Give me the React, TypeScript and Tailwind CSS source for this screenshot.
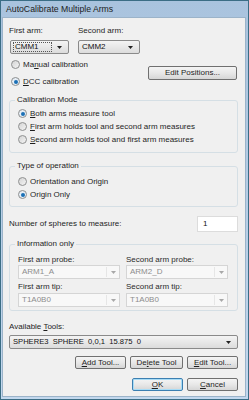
import React from "react";

const font = { fontFamily: '"Liberation Sans", Arial, sans-serif' };

function Radio({ checked, label, u }: { checked?: boolean; label: string; u?: number }) {
  return (
    <div className="flex items-center h-[13px]">
      <span
        className={`w-[9px] h-[9px] rounded-full border border-[#8e8f8f] flex items-center justify-center ${
          checked ? "bg-[#e6eef6]" : "bg-gradient-to-br from-[#d4d4d4] to-[#f4f4f4]"
        }`}
      >
        {checked && <span className="w-[4px] h-[4px] rounded-full bg-[#1b6fb5]" />}
      </span>
      <span className="ml-[3px] text-[#1e1e1e]">
        {u !== undefined ? (
          <>
            {label.slice(0, u)}
            <span className="underline">{label[u]}</span>
            {label.slice(u + 1)}
          </>
        ) : (
          label
        )}
      </span>
    </div>
  );
}

function Arrow({ light }: { light?: boolean }) {
  return (
    <svg width="5" height="3" viewBox="0 0 5 3">
      <path d="M0 0h5L2.5 3z" fill={light ? "#a8a8a8" : "#222"} />
    </svg>
  );
}

function Combo({ value, w, focus }: { value: string; w: string; focus?: boolean }) {
  return (
    <div
      className={`${w} h-[14px] rounded-[2px] border border-[#8a8a8a] bg-gradient-to-b from-[#f4f4f4] to-[#dcdcdc] flex items-center pl-[2px] pr-[6px]`}
    >
      <span
        className={`flex-1 h-[10px] flex items-center pl-[1px] text-[#111] ${
          focus ? "border border-dotted border-[#555] mr-[5px]" : ""
        }`}
      >
        {value}
      </span>
      <Arrow />
    </div>
  );
}

function DisabledCombo({ value }: { value: string }) {
  return (
    <div className="w-[102px] h-[14px] border border-[#d5d5d5] bg-[#f8f8f8] flex items-center pl-[3px]">
      <span className="flex-1 text-[#8d8d8d]">{value}</span>
      <span className="w-px h-[10px] bg-[#e6e6e6]" />
      <span className="w-[12px] flex justify-center">
        <Arrow light />
      </span>
    </div>
  );
}

function Btn({ children, w, h = "h-[13px]", def }: { children: React.ReactNode; w: string; h?: string; def?: boolean }) {
  return (
    <div
      className={`${w} ${h} rounded-[2px] border ${
        def ? "border-[#3c7fb1] shadow-[inset_0_0_0_1px_#a8dcf6]" : "border-[#707070]"
      } bg-gradient-to-b from-[#f4f4f4] via-[#e8e8e8] to-[#d6d6d6] flex items-center justify-center text-[#1e1e1e]`}
    >
      {children}
    </div>
  );
}

function Group({ title, children, cls }: { title: string; children: React.ReactNode; cls: string }) {
  return (
    <div className={`relative border border-[#d5dfe5] rounded-[3px] ${cls}`}>
      <span className="absolute -top-[7px] left-[5px] px-[2px] bg-[#f0f0f0] text-[#1e1e1e] leading-[12px]">
        {title}
      </span>
      {children}
    </div>
  );
}

export default function App() {
  return (
    <div
      style={font}
      className="w-[249px] h-[400px] bg-[#3b6d85] p-px text-[8px] leading-[12px] flex flex-col"
    >
      <div className="flex-1 flex flex-col bg-gradient-to-b from-[#a9c3de] to-[#c3d8ee] pl-[1px] pr-[2px] pb-[2px]">
        {/* Title bar */}
        <div className="h-[16px] flex items-center pl-[4px] text-[8.7px] text-[#1c1c1c]">
          AutoCalibrate Multiple Arms
        </div>

        {/* Body */}
        <div className="flex-1 bg-[#f0f0f0] border border-[#9bb3c9] pl-[6px] pr-[7px] pt-[7px] flex flex-col">
          <div className="flex gap-[9px]">
            <div className="flex flex-col">
              <span className="text-[#1e1e1e] h-[12px]">First arm:</span>
              <div className="mt-[3px] ml-[1px]">
                <Combo value="CMM1" w="w-[59px]" focus />
              </div>
            </div>
            <div className="flex flex-col">
              <span className="text-[#1e1e1e] h-[12px]">Second arm:</span>
              <div className="mt-[3px]">
                <Combo value="CMM2" w="w-[62px]" />
              </div>
            </div>
          </div>

          <div className="flex mt-[4px]">
            <div className="flex flex-col gap-[4px] pl-[2px]">
              <Radio label="Manual calibration" u={2} />
              <Radio label="DCC calibration" checked u={0} />
            </div>
            <div className="ml-auto mt-[8px] mr-[1px]">
              <Btn w="w-[89px]" h="h-[14px]">Edit Positions...</Btn>
            </div>
          </div>

          <Group title="Calibration Mode" cls="mt-[12px] h-[53px] pl-[8px] pt-[6px] flex flex-col">
            <Radio label="Both arms measure tool" checked u={0} />
            <Radio label="First arm holds tool and second arm measures" u={0} />
            <Radio label="Second arm holds tool and first arm measures" u={0} />
          </Group>

          <Group title="Type of operation" cls="mt-[13px] h-[41px] pl-[8px] pt-[8px] flex flex-col">
            <Radio label="Orientation and Origin" />
            <Radio label="Origin Only" checked />
          </Group>

          <div className="flex items-center mt-[9px] h-[16px]">
            <span className="text-[#1e1e1e]">Number of spheres to measure:</span>
            <div className="ml-auto w-[41px] h-[16px] bg-white border border-[#dcdcdc] pl-[5px] flex items-center text-[#111]">
              1
            </div>
          </div>

          <Group title="Information only" cls="mt-[12px] h-[67px] px-[8px] pt-[9px]">
            <div className="flex gap-[6px]">
              <div className="flex flex-col">
                <span className="text-[#2a2a2a] leading-[11px]">First arm probe:</span>
                <DisabledCombo value="ARM1_A" />
                <span className="text-[#2a2a2a] leading-[11px] mt-[2px]">First arm tip:</span>
                <div className="mt-[1px]">
                  <DisabledCombo value="T1A0B0" />
                </div>
              </div>
              <div className="flex flex-col">
                <span className="text-[#2a2a2a] leading-[11px]">Second arm probe:</span>
                <DisabledCombo value="ARM2_D" />
                <span className="text-[#2a2a2a] leading-[11px] mt-[2px]">Second arm tip:</span>
                <div className="mt-[1px]">
                  <DisabledCombo value="T1A0B0" />
                </div>
              </div>
            </div>
          </Group>

          <span className="mt-[10px] text-[#1e1e1e]">
            Available <span className="underline">T</span>ools:
          </span>
          <div className="mt-[2px] h-[14px] rounded-[2px] border border-[#8a8a8a] bg-gradient-to-b from-[#f4f4f4] to-[#dcdcdc] flex items-center pl-[3px] pr-[6px]">
            <span className="flex-1 text-[#111] whitespace-pre text-[7.6px]">SPHERE3  SPHERE  0,0,1  15.875  0</span>
            <Arrow />
          </div>

          <div className="flex justify-end gap-[4px] mt-[7px]">
            <Btn w="w-[51px]">
              <span className="underline">A</span>dd Tool...
            </Btn>
            <Btn w="w-[53px]">
              De<span className="underline">l</span>ete Tool
            </Btn>
            <Btn w="w-[51px]">
              <span className="underline">E</span>dit Tool...
            </Btn>
          </div>
          <div className="flex justify-end gap-[4px] mt-[9px]">
            <Btn w="w-[51px]" def>
              <span className="underline">O</span>K
            </Btn>
            <Btn w="w-[51px]">
              <span className="underline">C</span>ancel
            </Btn>
          </div>
        </div>
      </div>
    </div>
  );
}
